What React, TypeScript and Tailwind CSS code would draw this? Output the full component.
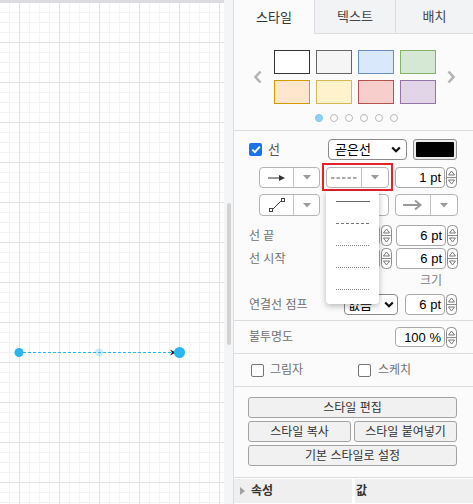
import React from "react";

const SWATCHES = [
  { fill: "#ffffff", stroke: "#333333" },
  { fill: "#f5f5f5", stroke: "#666666" },
  { fill: "#dae8fc", stroke: "#6c8ebf" },
  { fill: "#d5e8d4", stroke: "#82b366" },
  { fill: "#ffe6cc", stroke: "#d79b00" },
  { fill: "#fff2cc", stroke: "#d6b656" },
  { fill: "#f8cecc", stroke: "#b85450" },
  { fill: "#e1d5e7", stroke: "#9673a6" },
];

const CanvasGrid = () => {
  const minorV: number[] = [];
  const majorV: number[] = [];
  for (let x = 9.5; x < 224; x += 10) ((x - 19.5) % 40 === 0 ? majorV : minorV).push(x);
  const minorH: number[] = [];
  const majorH: number[] = [];
  for (let y = 9.5; y < 502; y += 10) ((y - 39.5) % 40 === 0 ? majorH : minorH).push(y);

  return (
    <svg width="224" height="501" className="block">
      <rect width="224" height="501" fill="#ffffff" />
      {minorV.map((x) => <line key={"mv" + x} x1={x} y1={0} x2={x} y2={501} stroke="#f3f3f3" />)}
      {minorH.map((y) => <line key={"mh" + y} x1={0} y1={y} x2={224} y2={y} stroke="#f3f3f3" />)}
      {majorV.map((x) => <line key={"Mv" + x} x1={x} y1={0} x2={x} y2={501} stroke="#e2e2e2" />)}
      {majorH.map((y) => <line key={"Mh" + y} x1={0} y1={y} x2={224} y2={y} stroke="#e2e2e2" />)}
      {/* selected edge */}
      <line x1="23" y1="349.5" x2="172" y2="349.5" stroke="#29b6f2" strokeWidth="1.2" strokeDasharray="3 2" />
      <path d="M170 346.5 L176 349.5 L170 352.5 L172 349.5 Z" fill="#222" />
      <circle cx="99" cy="349.5" r="4" fill="#29b6f2" opacity="0.25" />
      <circle cx="19" cy="349.5" r="4.5" fill="#29b6f2" />
      <circle cx="179.5" cy="349.5" r="5.5" fill="#29b6f2" />
    </svg>
  );
};

const Spinner = () => (
  <svg width="11" height="21" viewBox="0 0 11 21" className="block shrink-0">
    <rect x="0.5" y="0.5" width="10" height="20" rx="4" fill="#fff" stroke="#8c8c8c" />
    <line x1="0.5" y1="10.5" x2="10.5" y2="10.5" stroke="#8c8c8c" />
    <path d="M2.5 8 L5.5 4 L8.5 8 Z" fill="none" stroke="#777" />
    <path d="M2.5 13 L8.5 13 L5.5 17 Z" fill="none" stroke="#777" />
  </svg>
);

const NumBox = ({ value, w }: { value: string; w: string }) => (
  <div className={`${w} h-full flex items-center justify-end pr-[3px] bg-white border border-[#a8a8a8] rounded-[4px] text-[13px] leading-none text-black`}>
    {value}
  </div>
);

const Caret = () => (
  <svg width="8" height="5" viewBox="0 0 8 5" className="block">
    <path d="M0 0 L8 0 L4 4.5 Z" fill="#9a9a9a" />
  </svg>
);

const Chevron = () => (
  <svg width="10" height="7" viewBox="0 0 10 7" className="block">
    <path d="M1.2 1.5 L5 5.2 L8.8 1.5" fill="none" stroke="#111" strokeWidth="2.2" />
  </svg>
);

const SplitButton = ({ w, left, icon }: { w: string; left: string; icon: React.ReactNode }) => (
  <div className={`${w} h-full flex bg-white border border-[#b4b4b4] rounded-[4px]`}>
    <div className={`${left} flex items-center justify-center border-r border-[#c4c4c4]`}>{icon}</div>
    <div className="flex-1 flex items-center justify-center">
      <Caret />
    </div>
  </div>
);

const Check = ({ on }: { on?: boolean }) =>
  on ? (
    <span className="w-[13px] h-[13px] rounded-[2px] bg-[#1a73e8] flex items-center justify-center shrink-0">
      <svg width="10" height="9" viewBox="0 0 10 9">
        <path d="M1.3 4.6 L3.9 7.1 L8.8 1.6" fill="none" stroke="#fff" strokeWidth="2" />
      </svg>
    </span>
  ) : (
    <span className="w-[13px] h-[13px] rounded-[2px] bg-white border border-[#767676] shrink-0" />
  );

const Btn = ({ label, w }: { label: string; w: string }) => (
  <div className={`${w} h-[21px] flex items-center justify-center bg-[#f1f1f1] border border-[#a3a3a3] rounded-[3px] text-[12px] leading-none text-[#333]`}>
    {label}
  </div>
);

const LineItem = ({ dash, color }: { dash?: string; color: string }) => (
  <div className="h-[22px]">
    <svg width="53" height="22" className="block">
      <line x1="10" y1="10.5" x2="44" y2="10.5" stroke={color} strokeDasharray={dash} />
    </svg>
  </div>
);

export default function App() {
  return (
    <div className="w-[473px] h-[504px] flex overflow-hidden bg-white font-['Liberation_Sans','Noto_Sans_CJK_KR',sans-serif]">
      {/* canvas */}
      <div className="w-[224px] border-t-[3px] border-[#dadce0]">
        <CanvasGrid />
      </div>
      {/* scroll strip */}
      <div className="w-[9px] bg-[#f4f5f7] pt-[203px]">
        <div className="ml-[3px] w-[4px] h-[142px] rounded-full bg-[#d3d3d3]" />
      </div>

      {/* format panel */}
      <div className="w-[240px] border-l border-[#dadce0] bg-[#fbfbfb] flex flex-col">
        {/* tabs */}
        <div className="h-[34px] flex text-[13px] leading-none">
          <div className="w-[80px] flex items-center justify-center text-[#333]">스타일</div>
          <div className="w-[81px] flex items-center justify-center bg-[#f1f3f4] border-l border-b border-[#dadce0] text-[#444]">텍스트</div>
          <div className="w-[78px] flex items-center justify-center bg-[#f1f3f4] border-l border-b border-[#dadce0] text-[#444]">배치</div>
        </div>

        {/* swatches */}
        <div className="h-[97px] border-b border-[#dadce0] pt-[16px]">
          <div className="flex items-center">
            <svg width="10" height="14" viewBox="0 0 10 14" className="ml-[19px] mr-[11px] block">
              <path d="M7.5 1.5 L2.5 7 L7.5 12.5" fill="none" stroke="#b3b3b3" strokeWidth="2.6" />
            </svg>
            <div className="grid grid-cols-4 gap-x-[6px] gap-y-[6px]">
              {SWATCHES.map((s) => (
                <div
                  key={s.fill}
                  className="w-[36px] h-[24px] border-[1.5px]"
                  style={{ background: s.fill, borderColor: s.stroke }}
                />
              ))}
            </div>
            <svg width="10" height="14" viewBox="0 0 10 14" className="ml-[10px] block">
              <path d="M2.5 1.5 L7.5 7 L2.5 12.5" fill="none" stroke="#b3b3b3" strokeWidth="2.6" />
            </svg>
          </div>
          <div className="mt-[10px] ml-[81px] flex gap-[7px]">
            <span className="w-[8px] h-[8px] rounded-full bg-[#8ed3f7] border border-[#7cc6ec]" />
            {[0, 1, 2, 3, 4].map((i) => (
              <span key={i} className="w-[8px] h-[8px] rounded-full bg-white border border-[#b8b8b8]" />
            ))}
          </div>
        </div>

        {/* line section */}
        <div className="relative h-[190px] border-b border-[#dadce0] pt-[8px] text-[12px] leading-none">
          {/* 선 */}
          <div className="h-[21px] flex items-center">
            <div className="w-[94px] pl-[15px] flex items-center">
              <Check on />
              <span className="ml-[6px] text-[13px] text-[#556]">선</span>
            </div>
            <div className="w-[79px] h-full flex items-center justify-between pl-[6px] pr-[5px] bg-white border border-[#8a8a8a] rounded-[4px] text-[13px] text-black">
              <span>곧은선</span>
              <Chevron />
            </div>
            <div className="ml-[6px] w-[44px] h-full p-[2px] bg-[#ececec] border border-[#8f8f8f] rounded-[3px]">
              <div className="w-full h-full bg-black rounded-[1px]" />
            </div>
          </div>

          {/* arrows / pattern / width */}
          <div className="mt-[7px] h-[21px] flex pl-[25px]">
            <SplitButton
              w="w-[61px]"
              left="w-[34px]"
              icon={
                <svg width="18" height="8" viewBox="0 0 18 8" className="block">
                  <line x1="0" y1="4" x2="13" y2="4" stroke="#333" />
                  <path d="M11 1 L17 4 L11 7 Z" fill="#333" />
                </svg>
              }
            />
            <div className="relative ml-[6px]">
              <div className="absolute left-[-4px] right-[-4px] top-[-4px] bottom-[-3px] border-2 border-[#e5212b]" />
              <SplitButton
                w="w-[63px]"
                left="w-[35px]"
                icon={
                  <svg width="27" height="4" viewBox="0 0 27 4" className="block">
                    <line x1="0" y1="2" x2="27" y2="2" stroke="#555" strokeDasharray="3.5 2" />
                  </svg>
                }
              />
            </div>
            <div className="ml-[6px] h-full flex gap-[1px]">
              <NumBox value="1 pt" w="w-[50px]" />
              <Spinner />
            </div>
          </div>

          {/* waypoints / end arrow */}
          <div className="mt-[6px] h-[22px] flex pl-[25px]">
            <SplitButton
              w="w-[61px]"
              left="w-[34px]"
              icon={
                <svg width="16" height="16" viewBox="0 0 16 16" className="block">
                  <line x1="2.5" y1="13.5" x2="13.5" y2="2.5" stroke="#444" />
                  <rect x="0.5" y="11.5" width="3" height="3" fill="#fff" stroke="#444" />
                  <rect x="12.5" y="1.5" width="3" height="3" fill="#fff" stroke="#444" />
                </svg>
              }
            />
            <div className="ml-[6px]">
              <SplitButton w="w-[63px]" left="w-[35px]" icon={null} />
            </div>
            <div className="ml-[6px]">
              <SplitButton
                w="w-[63px]"
                left="w-[35px]"
                icon={
                  <svg width="20" height="12" viewBox="0 0 20 12" className="block">
                    <line x1="0" y1="6" x2="17" y2="6" stroke="#9a9a9a" strokeWidth="2" />
                    <path d="M12 1.5 L17.5 6 L12 10.5" fill="none" stroke="#9a9a9a" strokeWidth="2" />
                  </svg>
                }
              />
            </div>
          </div>

          {/* 선 끝 */}
          <div className="mt-[9px] h-[21px] flex items-center pl-[15px]">
            <span className="w-[91px] text-[#707070]">선 끝</span>
            <div className="h-full flex gap-[1px]">
              <NumBox value="0 pt" w="w-[40px]" />
              <Spinner />
            </div>
            <div className="ml-[4px] h-full flex gap-[1px]">
              <NumBox value="6 pt" w="w-[50px]" />
              <Spinner />
            </div>
          </div>

          {/* 선 시작 */}
          <div className="mt-[2px] h-[21px] flex items-center pl-[15px]">
            <span className="w-[91px] text-[#707070]">선 시작</span>
            <div className="h-full flex gap-[1px]">
              <NumBox value="0 pt" w="w-[40px]" />
              <Spinner />
            </div>
            <div className="ml-[4px] h-full flex gap-[1px]">
              <NumBox value="6 pt" w="w-[50px]" />
              <Spinner />
            </div>
          </div>

          <div className="mt-[4px] h-[16px] flex items-center justify-end pr-[31px] text-[#808080]">크기</div>

          {/* 연결선 점프 */}
          <div className="mt-[5px] h-[21px] flex items-center pl-[15px]">
            <span className="w-[95px] text-[#707070]">연결선 점프</span>
            <div className="w-[54px] h-full flex items-center justify-between pl-[3px] pr-[3px] bg-white border border-[#8a8a8a] rounded-[4px] text-[13px] text-black">
              <span>없음</span>
              <Chevron />
            </div>
            <div className="ml-[7px] h-full flex gap-[1px]">
              <NumBox value="6 pt" w="w-[40px]" />
              <Spinner />
            </div>
          </div>

          {/* pattern dropdown menu */}
          <div className="absolute left-[92px] top-[60px] w-[53px] h-[113px] bg-white rounded-b-[4px] shadow-[0_2px_6px_rgba(0,0,0,0.28)] z-10">
            <LineItem color="#666" />
            <LineItem color="#777" dash="3 2" />
            <LineItem color="#888" dash="1 1" />
            <LineItem color="#888" dash="1 1" />
            <LineItem color="#888" dash="1 1" />
          </div>
        </div>

        {/* opacity */}
        <div className="h-[33px] border-b border-[#dadce0] flex items-center pl-[15px] text-[12px] leading-none">
          <span className="w-[146px] text-[#707070]">불투명도</span>
          <div className="h-[20px] flex gap-[1px]">
            <NumBox value="100 %" w="w-[50px]" />
            <Spinner />
          </div>
        </div>

        {/* shadow / sketch */}
        <div className="h-[33px] border-b border-[#dadce0] flex items-center pl-[17px] text-[12px] leading-none text-[#707070]">
          <Check />
          <span className="ml-[6px] w-[88px]">그림자</span>
          <Check />
          <span className="ml-[7px]">스케치</span>
        </div>

        {/* style buttons */}
        <div className="h-[90px] pt-[10px] pl-[14px] flex flex-col gap-[3px]">
          <Btn label="스타일 편집" w="w-[209px]" />
          <div className="flex gap-[3px]">
            <Btn label="스타일 복사" w="w-[103px]" />
            <Btn label="스타일 붙여넣기" w="w-[103px]" />
          </div>
          <Btn label="기본 스타일로 설정" w="w-[209px]" />
        </div>

        {/* property table header */}
        <div className="border-t border-[#dadce0] bg-white py-[1px] flex gap-[3px] text-[12px] leading-none font-bold text-[#333]">
          <div className="w-[118px] h-[24px] bg-[#efefef] flex items-center pl-[6px]">
            <svg width="5" height="8" viewBox="0 0 5 8" className="block mr-[6px]">
              <path d="M0 0 L5 4 L0 8 Z" fill="#a0a0a0" />
            </svg>
            속성
          </div>
          <div className="w-[118px] h-[24px] bg-[#efefef] flex items-center pl-[1px]">값</div>
        </div>
      </div>
    </div>
  );
}
